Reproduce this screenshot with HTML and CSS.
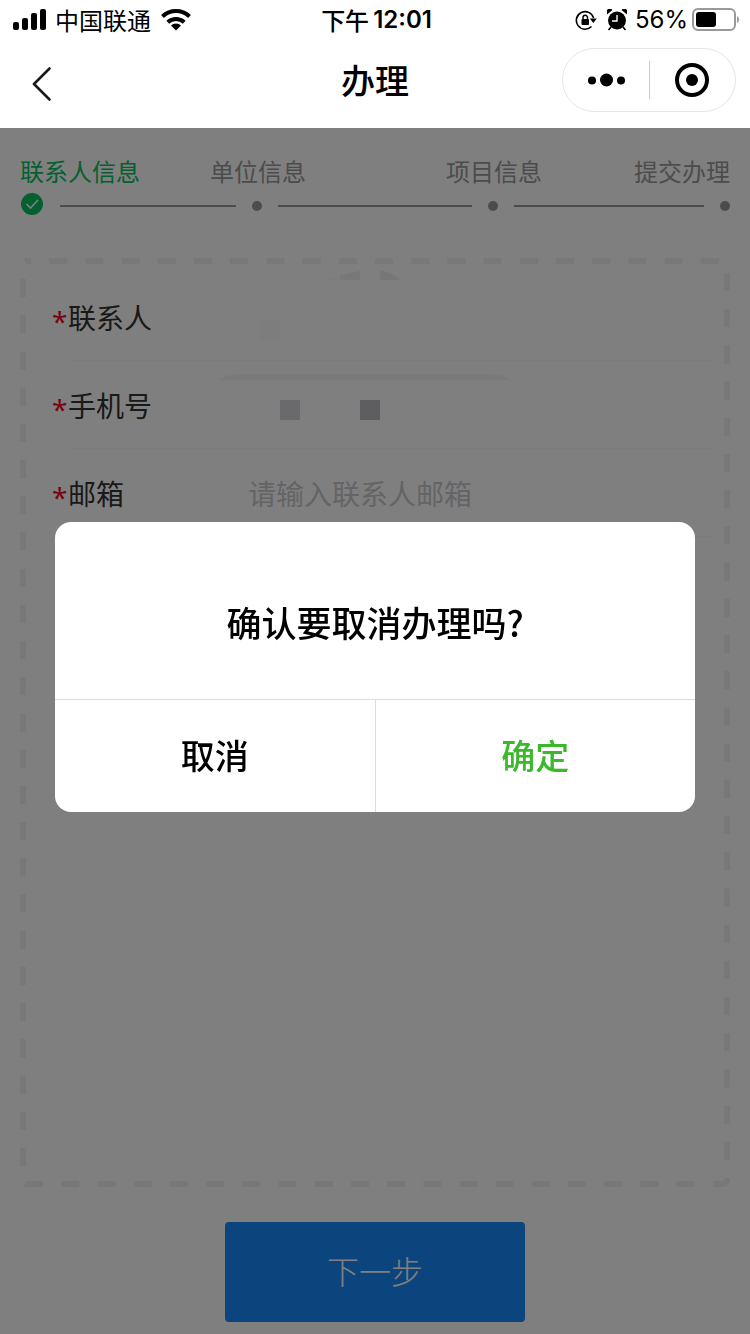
FILE: index.html
```
<!DOCTYPE html>
<html lang="zh-CN">
<head>
    <meta charset="UTF-8">
    <meta name="viewport" content="width=device-width, initial-scale=1.0">
    <title>办理</title>
    <link rel="stylesheet" href="styles.css">
</head>
<body>
    <header class="header">
        <div class="status-bar">
            <div class="status-left">
                <svg class="signal" width="34" height="22" viewBox="0 0 34 22">
                    <rect x="0" y="13" width="6" height="8" rx="2"/>
                    <rect x="9" y="9" width="6" height="12" rx="2"/>
                    <rect x="18" y="4" width="6" height="17" rx="2"/>
                    <rect x="27" y="0" width="6" height="21" rx="2"/>
                </svg>
                <span>中国联通</span>
                <svg class="wifi" width="30" height="22" viewBox="0 0 30 22">
                    <path d="M1.500 7.500a19.500 19.500 0 0 1 27 0" fill="none" stroke="#000" stroke-width="4"/>
                    <path d="M6.800 13.200a12 12 0 0 1 16.400 0" fill="none" stroke="#000" stroke-width="4"/>
                    <path d="M15 21.500l-5-5a7.500 7.500 0 0 1 10 0z"/>
                </svg>
            </div>
            <div class="status-time">下午<span class="clock">12:01</span></div>
            <div class="status-right">
                <svg width="22" height="22" viewBox="0 0 22 22">
                    <path d="M16.500 17.500A8.800 8.800 0 1 1 18.600 9" fill="none" stroke="#000" stroke-width="1.600"/>
                    <path d="M14.800 9.500h7l-3.500 4.500z"/>
                    <rect x="6.500" y="10" width="7.500" height="6" rx="1"/>
                    <path d="M8 10.500V8.500a2.200 2.200 0 0 1 4.500 0v2" fill="none" stroke="#000" stroke-width="1.500"/>
                </svg>
                <svg class="alarm" width="20" height="22" viewBox="0 0 20 22">
                    <circle cx="10" cy="11.500" r="9"/>
                    <path d="M0 5.500a3.500 3.500 0 0 1 5.500-4.500zM20 5.500a3.500 3.500 0 0 0-5.500-4.500z"/>
                    <path d="M4 18l-2.500 3M16 18l2.500 3" stroke="#000" stroke-width="1.600"/>
                    <path d="M10 6v6H5" fill="none" stroke="#fff" stroke-width="1.400"/>
                </svg>
                <span class="percent">56%</span>
                <svg class="battery" width="48" height="24" viewBox="0 0 48 24">
                    <rect x="1" y="1" width="42" height="21" rx="5" fill="none" stroke="#999" stroke-width="2"/>
                    <rect x="4" y="4" width="20" height="15" rx="3"/>
                    <path d="M45 8a4 4 0 0 1 0 7z" fill="#999"/>
                </svg>
            </div>
        </div>
        <nav class="nav-bar">
            <button class="back" type="button" aria-label="返回">
                <svg width="20" height="34" viewBox="0 0 20 34">
                    <path d="M17.500 1.500L2 17l15.500 15.500" fill="none" stroke="#1a1a1a" stroke-width="2.600" stroke-linecap="round" stroke-linejoin="round"/>
                </svg>
            </button>
            <h1 class="nav-title">办理</h1>
            <div class="capsule">
                <button class="capsule-button" type="button" aria-label="更多">
                    <svg width="38" height="14" viewBox="0 0 38 14">
                        <circle cx="5" cy="7.500" r="4"/>
                        <circle cx="19.500" cy="7" r="6.500"/>
                        <circle cx="34" cy="7.500" r="4"/>
                    </svg>
                </button>
                <button class="capsule-button" type="button" aria-label="关闭">
                    <svg width="34" height="34" viewBox="0 0 34 34">
                        <circle cx="17" cy="17" r="15" fill="none" stroke="#000" stroke-width="4"/>
                        <circle cx="17" cy="17" r="6"/>
                    </svg>
                </button>
            </div>
        </nav>
    </header>

    <main class="page">
        <ol class="steps">
            <li class="step active">联系人信息</li>
            <li class="step">单位信息</li>
            <li class="step">项目信息</li>
            <li class="step">提交办理</li>
        </ol>
        <div class="track">
            <svg class="check" width="22" height="22" viewBox="0 0 22 22">
                <circle cx="11" cy="11" r="11" fill="#07c160"/>
                <path d="M5.500 11l4 4L17 7" fill="none" stroke="#fff" stroke-width="1.600"/>
            </svg>
            <span class="line"></span>
            <span class="dot"></span>
            <span class="line"></span>
            <span class="dot"></span>
            <span class="line"></span>
            <span class="dot"></span>
        </div>

        <form class="form" id="contactForm">
            <svg class="form-border" aria-hidden="true">
                <rect class="form-dash" x="3" y="3" rx="4" pathLength="3228"/>
            </svg>
            <div class="field">
                <label for="name"><span class="required">*</span>联系人</label>
                <input id="name" type="text">
            </div>
            <div class="field">
                <label for="phone"><span class="required">*</span>手机号</label>
                <input id="phone" type="tel">
            </div>
            <div class="field">
                <label for="email"><span class="required">*</span>邮箱</label>
                <input id="email" type="email" placeholder="请输入联系人邮箱">
            </div>
            <!-- masked personal data -->
            <svg class="mosaic" width="290" height="150" viewBox="0 0 290 150" aria-hidden="true">
                <path d="M100 10l20-3v3z" fill="#fafafa"/>
                <path d="M120 5l20-4v9h-20z" fill="#f0f0f0"/>
                <path d="M160 0q14 3 20 10h-20z" fill="#eee"/>
                <rect x="40" y="50" width="20" height="20" fill="#fbfbfc"/>
                <path d="M0 110q6-6 20-6h250q14 0 20 6z" fill="#f4f4f7"/>
                <rect x="60" y="130" width="20" height="20" fill="#d4d4d8"/>
                <rect x="140" y="130" width="20" height="20" fill="#bcbcc0"/>
            </svg>
        </form>

        <button class="next" type="submit" form="contactForm">下一步</button>
    </main>

    <div class="mask">
        <div class="dialog" role="dialog" aria-modal="true" aria-labelledby="dialogTitle">
            <h2 class="dialog-title" id="dialogTitle">确认要取消办理吗?</h2>
            <div class="dialog-actions">
                <button class="dialog-button" type="button">取消</button>
                <button class="dialog-button confirm" type="button">确定</button>
            </div>
        </div>
    </div>
</body>
</html>
```
FILE: styles.css
```
* {
    box-sizing: border-box;
}
body {
    display: flex;
    flex-direction: column;
    min-height: 100vh;
    margin: 0;
    background: #fff;
    color: #000;
    font-family: "Noto Sans CJK SC", sans-serif;
    font-size: 28px;
}
button {
    padding: 0;
    border: none;
    background: none;
    color: inherit;
    font-family: inherit;
    cursor: pointer;
}
svg {
    display: block;
    flex: none;
}

/* header stays above the mask */
.header {
    position: relative;
    z-index: 2;
    background: #fff;
}
.status-bar {
    display: grid;
    grid-template-columns: 1fr auto 1fr;
    align-items: center;
    height: 40px;
    padding: 0 10px 0 13px;
    font-size: 24px;
    line-height: 40px;
}
.status-left,
.status-right {
    display: flex;
    align-items: center;
    gap: 8px;
}
.wifi {
    margin-left: 2px;
}
.status-time {
    display: flex;
    gap: 4px;
    font-weight: 500;
}
.clock {
    font-family: Inter, sans-serif;
    font-weight: 600;
}
.status-right {
    justify-content: flex-end;
}
.alarm {
    margin-left: 2px;
}
.percent {
    font-family: Inter, sans-serif;
}
.battery {
    margin-left: -4px;
}
.nav-bar {
    display: grid;
    grid-template-columns: 1fr auto 1fr;
    align-items: center;
    height: 88px;
    padding: 0 14px 8px;
}
.back {
    justify-self: start;
    padding: 8px 18px 0;
}
.nav-title {
    margin: 0;
    font-size: 34px;
    font-weight: 500;
    line-height: 48px;
}
.capsule {
    display: flex;
    justify-self: end;
    align-items: center;
    width: 174px;
    height: 64px;
    border: 1px solid #e6e6e6;
    border-radius: 32px;
}
.capsule-button {
    display: flex;
    flex: 1;
    align-items: center;
    justify-content: center;
    height: 38px;
}
.capsule-button + .capsule-button {
    border-left: 1px solid #ccc;
}

.page {
    display: flex;
    flex: 1;
    flex-direction: column;
    padding: 31px 20px 12px;
}
.steps {
    display: grid;
    grid-template-columns: repeat(6, 1fr);
    margin: 0;
    padding: 0;
    color: #999;
    font-size: 24px;
    line-height: 24px;
    list-style: none;
    text-align: center;
    white-space: nowrap;
}
.step {
    display: flex;
    grid-column: span 2;
    justify-content: center;
}
.step:first-child {
    grid-column: span 1;
    justify-content: flex-start;
}
.step:last-child {
    grid-column: span 1;
    justify-content: flex-end;
}
.step.active {
    color: #07c160;
}
.track {
    display: grid;
    grid-template-columns: 24px 176fr 10px 194fr 10px 190fr 10px;
    gap: 16px;
    align-items: center;
    height: 26px;
    margin-top: 10px;
}
.check {
    align-self: start;
    justify-self: center;
}
.line {
    height: 2px;
    background: #999;
}
.dot {
    height: 10px;
    border-radius: 50%;
    background: #999;
}

.form {
    position: relative;
    flex: 1;
    margin-top: 39px;
    padding: 15px 14px 16px 32px;
}
.form-border {
    position: absolute;
    top: 0;
    left: 0;
    width: 100%;
    height: 100%;
}
.form-dash {
    width: calc(100% - 6px);
    height: calc(100% - 6px);
    fill: none;
    stroke: #f0f0f0;
    stroke-width: 6px;
    stroke-dasharray: 18 18;
    stroke-dashoffset: -22;
}
.field {
    position: relative;
    display: flex;
    align-items: center;
    height: 88px;
}
.field::after {
    position: absolute;
    right: 0;
    bottom: 0;
    left: 16px;
    height: 1px;
    background: #f7f8fa;
    content: "";
}
.field label {
    display: flex;
    align-items: center;
    width: 196px;
    color: #323233;
    line-height: 40px;
}
.required {
    width: 16px;
    height: 32px;
    color: #ee0a24;
    font-family: "Noto Sans", sans-serif;
}
.field input {
    flex: 1;
    min-width: 0;
    padding: 0;
    border: none;
    outline: none;
    background: transparent;
    font-family: inherit;
    font-size: 28px;
}
.field input::placeholder {
    color: #c8c9cc;
}
.mosaic {
    position: absolute;
    top: 12px;
    left: 200px;
}
.next {
    align-self: center;
    width: 300px;
    height: 100px;
    margin-top: 35px;
    padding-bottom: 4px;
    border-radius: 4px;
    background: #1989fa;
    color: #fff;
    font-size: 32px;
    font-weight: 300;
}

.mask {
    position: fixed;
    top: 0;
    right: 0;
    bottom: 0;
    left: 0;
    z-index: 1;
    display: flex;
    align-items: center;
    justify-content: center;
    padding: 0 55px;
    background: rgba(0, 0, 0, 0.5);
}
.dialog {
    width: 100%;
    max-width: 640px;
    overflow: hidden;
    border-radius: 16px;
    background: #fff;
}
.dialog-title {
    margin: 0;
    padding: 76px 40px 53px;
    font-size: 35px;
    font-weight: 500;
    line-height: 48px;
    text-align: center;
}
.dialog-actions {
    display: flex;
    border-top: 1px solid #dcdcdc;
}
.dialog-button {
    flex: 1;
    height: 112px;
    padding-bottom: 4px;
    font-size: 34px;
    font-weight: 500;
}
.dialog-button + .dialog-button {
    border-left: 1px solid #dcdcdc;
}
.confirm {
    color: #3cb82c;
}
```
